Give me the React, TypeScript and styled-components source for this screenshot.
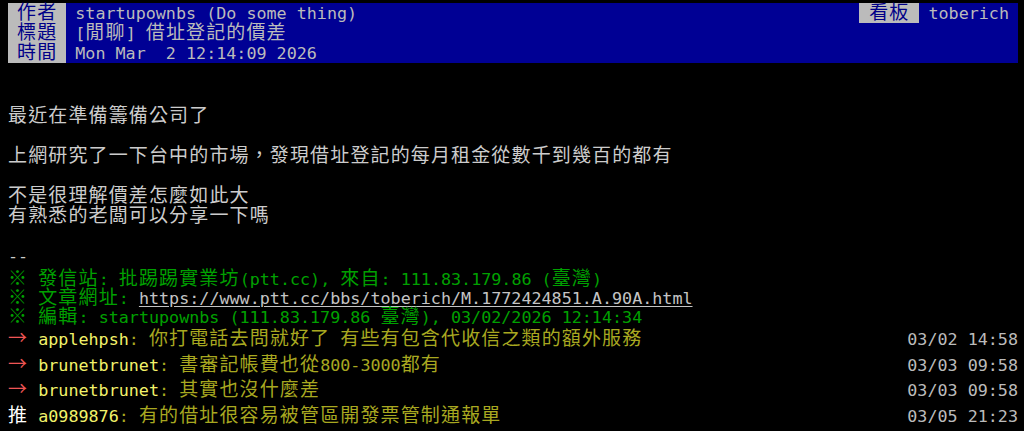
import React from "react";
import styled, { createGlobalStyle } from "styled-components";

const GlobalStyle = createGlobalStyle`
  html, body {
    margin: 0;
    padding: 0;
    background: #000;
  }
  body {
    overflow: hidden;
  }
`;

const WIDE_RE = /([\u2190-\u21ff\u203b\u2e80-\u9fff\uf900-\ufaff\uff00-\uffef\u3000-\u303f]+)/;

const Wide = styled.span`
  font-family: "Noto Sans CJK TC", "Noto Sans CJK JP", sans-serif;
  font-size: 19px;
  letter-spacing: 1.14px;
  line-height: 0;
`;

function T({ children }: { children: string }) {
  const parts = children.split(WIDE_RE);
  return (
    <>
      {parts.map((p, i) => (i % 2 === 1 ? <Wide key={i}>{p}</Wide> : p))}
    </>
  );
}

const Page = styled.div`
  width: 1010px;
  margin-left: 8px;
  padding-top: 3px;
  font-family: "DejaVu Sans Mono", "Liberation Mono", monospace;
  font-size: 16.73px;
  color: #cccccc;
  white-space: pre;
`;

const MetaRow = styled.div`
  display: flex;
  height: 20px;
  line-height: 20px;
  background: #000094;
`;

const MetaTag = styled.span<{ $pad?: number }>`
  flex: none;
  background: #bbbbbb;
  color: #000088;
  padding: 0 ${(p) => p.$pad ?? 9}px;
`;

const MetaValue = styled.span<{ $grow?: boolean }>`
  flex: ${(p) => (p.$grow ? "1 1 auto" : "none")};
  color: #bbbbbb;
  padding: 0 9px;
`;

const ArticleBody = styled.div`
  padding-top: 3px;
`;

const ArticleLine = styled.div`
  height: 20px;
  line-height: 20px;
`;

const Signature = styled.div`
  margin-top: 4px;
  color: #00a000;
`;

const SigLine = styled.div`
  height: 19px;
  line-height: 19px;
`;

const Link = styled.span`
  color: #c4c4c4;
  text-decoration: underline;
  text-underline-offset: 2px;
`;

const PushRow = styled.div`
  display: flex;
  justify-content: space-between;
  height: 25.7px;
  line-height: 25.7px;
`;

const PushMain = styled.span`
  flex: none;
`;

const PushTag = styled.span<{ $hl?: boolean }>`
  color: ${(p) => (p.$hl ? "#ffffff" : "#ee5555")};
`;

const PushUser = styled.span`
  color: #f2f26a;
`;

const PushContent = styled.span`
  color: #a8a820;
`;

const PushTime = styled.span`
  flex: none;
  color: #bbbbbb;
`;

const articleLines = [
  "",
  "",
  "最近在準備籌備公司了",
  "",
  "上網研究了一下台中的市場，發現借址登記的每月租金從數千到幾百的都有",
  "",
  "不是很理解價差怎麼如此大",
  "有熟悉的老闆可以分享一下嗎",
  "",
  "--",
];

type Push = { tag: string; hl?: boolean; user: string; content: string; time: string };

const pushes: Push[] = [
  { tag: "→ ", user: "applehpsh", content: ": 你打電話去問就好了 有些有包含代收信之類的額外服務", time: "03/02 14:58" },
  { tag: "→ ", user: "brunetbrunet", content: ": 書審記帳費也從800-3000都有", time: "03/03 09:58" },
  { tag: "→ ", user: "brunetbrunet", content: ": 其實也沒什麼差", time: "03/03 09:58" },
  { tag: "推 ", hl: true, user: "a0989876", content: ": 有的借址很容易被管區開發票管制通報單", time: "03/05 21:23" },
];

export default function App() {
  return (
    <>
      <GlobalStyle />
      <Page>
        <MetaRow>
          <MetaTag><T>作者</T></MetaTag>
          <MetaValue $grow>startupownbs (Do some thing)</MetaValue>
          <MetaTag $pad={10}><T>看板</T></MetaTag>
          <MetaValue>toberich</MetaValue>
        </MetaRow>
        <MetaRow>
          <MetaTag><T>標題</T></MetaTag>
          <MetaValue $grow><T>[閒聊] 借址登記的價差</T></MetaValue>
        </MetaRow>
        <MetaRow>
          <MetaTag><T>時間</T></MetaTag>
          <MetaValue $grow>Mon Mar  2 12:14:09 2026</MetaValue>
        </MetaRow>

        <ArticleBody>
          {articleLines.map((l, i) => (
            <ArticleLine key={i}>
              <T>{l}</T>
            </ArticleLine>
          ))}
        </ArticleBody>

        <Signature>
          <SigLine>
            <T>※ 發信站: 批踢踢實業坊(ptt.cc), 來自: 111.83.179.86 (臺灣)</T>
          </SigLine>
          <SigLine>
            <T>※ 文章網址: </T>
            <Link>https://www.ptt.cc/bbs/toberich/M.1772424851.A.90A.html</Link>
          </SigLine>
          <SigLine>
            <T>※ 編輯: startupownbs (111.83.179.86 臺灣), 03/02/2026 12:14:34</T>
          </SigLine>
        </Signature>

        {pushes.map((p, i) => (
          <PushRow key={i}>
            <PushMain>
              <PushTag $hl={p.hl}><T>{p.tag}</T></PushTag>
              <PushUser>{p.user}</PushUser>
              <PushContent><T>{p.content}</T></PushContent>
            </PushMain>
            <PushTime>{p.time}</PushTime>
          </PushRow>
        ))}
      </Page>
    </>
  );
}
